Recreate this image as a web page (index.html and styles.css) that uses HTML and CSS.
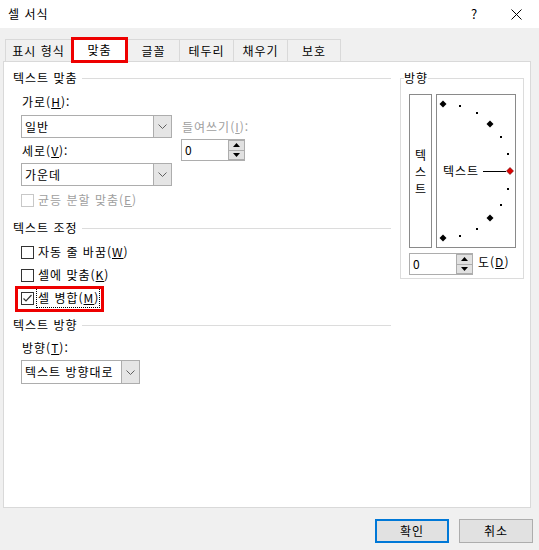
FILE: index.html
```html
<!DOCTYPE html>
<html lang="ko">
<head>
    <meta charset="UTF-8">
    <title>셀 서식</title>
    <link rel="stylesheet" href="styles.css">
</head>
<body>
<div class="dialog">
    <div class="titlebar">
        <span class="title">셀 서식</span>
        <span class="help">?</span>
        <span class="close">
            <svg width="11" height="11" viewBox="0 0 11 11"><path d="M0.5 0.5L10.5 10.5M10.5 0.5L0.5 10.5" stroke="#000" stroke-width="1" fill="none"/></svg>
        </span>
    </div>

    <!-- 탭 -->
    <div class="tabs">
        <div class="tab tab-1">표시 형식</div>
        <div class="tab tab-active">맞춤</div>
        <div class="tab tab-3">글꼴</div>
        <div class="tab tab-4">테두리</div>
        <div class="tab tab-5">채우기</div>
        <div class="tab tab-6">보호</div>
    </div>

    <div class="panel">
        <div class="left">
            <div class="group-title"><span>텍스트 맞춤</span></div>

            <div class="align-row">
                <div class="col-main">
                    <div class="label">가로(<u>H</u>):</div>
                    <div class="combo combo-h">
                        <span class="combo-text">일반</span>
                        <span class="combo-btn"><svg width="9" height="5" viewBox="0 0 9 5"><polyline points="0.5,0.5 4.5,4.5 8.5,0.5" fill="none" stroke="#606060"/></svg></span>
                    </div>
                    <div class="label label-v">세로(<u>V</u>):</div>
                    <div class="combo combo-v">
                        <span class="combo-text">가운데</span>
                        <span class="combo-btn"><svg width="9" height="5" viewBox="0 0 9 5"><polyline points="0.5,0.5 4.5,4.5 8.5,0.5" fill="none" stroke="#606060"/></svg></span>
                    </div>
                </div>
                <div class="col-indent">
                    <div class="label disabled">들여쓰기(<u>I</u>):</div>
                    <div class="spin">
                        <span class="spin-value">0</span>
                        <span class="spin-btns">
                            <span class="spin-btn"><svg width="7" height="4" viewBox="0 0 7 4"><polygon points="0,4 3.5,0 7,4" fill="#000"/></svg></span>
                            <span class="spin-btn"><svg width="7" height="4" viewBox="0 0 7 4"><polygon points="0,0 3.5,4 7,0" fill="#000"/></svg></span>
                        </span>
                    </div>
                </div>
            </div>

            <div class="check-row check-dist disabled">
                <span class="box box-disabled"></span>
                <span>균등 분할 맞춤(<u>E</u>)</span>
            </div>

            <div class="group-title title-control"><span>텍스트 조정</span></div>
            <div class="check-row check-first">
                <span class="box"></span>
                <span>자동 줄 바꿈(<u>W</u>)</span>
            </div>
            <div class="check-row check-next">
                <span class="box"></span>
                <span>셀에 맞춤(<u>K</u>)</span>
            </div>
            <div class="check-row check-next marked">
                <span class="box"><svg width="11" height="11" viewBox="0 0 11 11"><polyline points="1.5,5.5 4,8 9.5,2" fill="none" stroke="#333" stroke-width="1.2"/></svg></span>
                <span class="focus">셀 병합(<u>M</u>)</span>
            </div>

            <div class="group-title title-dir"><span>텍스트 방향</span></div>
            <div class="label label-dir">방향(<u>T</u>):</div>
            <div class="combo combo-dir">
                <span class="combo-text">텍스트 방향대로</span>
                <span class="combo-btn"><svg width="9" height="5" viewBox="0 0 9 5"><polyline points="0.5,0.5 4.5,4.5 8.5,0.5" fill="none" stroke="#606060"/></svg></span>
            </div>
        </div>

        <!-- 방향 그룹 -->
        <fieldset class="orient">
            <legend>방향</legend>
            <div class="orient-body">
                <div class="vert-box">
                    <span>텍</span><span>스</span><span>트</span>
                </div>
                <div class="dial">
                    <svg width="78" height="152" viewBox="0 0 78 152">
                        <g fill="#000">
                            <polygon points="6,5.5 9.5,9 6,12.5 2.5,9"/>
                            <polygon points="53,25.5 56.5,29 53,32.5 49.5,29"/>
                            <polygon points="53,119.5 56.5,123 53,126.5 49.5,123"/>
                            <polygon points="6,139.5 9.5,143 6,146.5 2.5,143"/>
                            <rect x="22" y="10" width="2" height="2"/>
                            <rect x="39" y="17" width="2" height="2"/>
                            <rect x="63" y="41" width="2" height="2"/>
                            <rect x="70" y="58" width="2" height="2"/>
                            <rect x="70" y="93" width="2" height="2"/>
                            <rect x="63" y="109" width="2" height="2"/>
                            <rect x="39" y="133" width="2" height="2"/>
                            <rect x="22" y="140" width="2" height="2"/>
                        </g>
                        <text x="6" y="80.5" class="dial-text">텍스트</text>
                        <line x1="46" y1="76.5" x2="69" y2="76.5" stroke="#000" stroke-width="1"/>
                        <polygon points="73,72.5 76.5,76 73,79.5 69.5,76" fill="#e00000" stroke="#5a0000" stroke-width="0.6"/>
                    </svg>
                </div>
            </div>
            <div class="degree-row">
                <div class="spin">
                    <span class="spin-value">0</span>
                    <span class="spin-btns">
                        <span class="spin-btn"><svg width="7" height="4" viewBox="0 0 7 4"><polygon points="0,4 3.5,0 7,4" fill="#000"/></svg></span>
                        <span class="spin-btn"><svg width="7" height="4" viewBox="0 0 7 4"><polygon points="0,0 3.5,4 7,0" fill="#000"/></svg></span>
                    </span>
                </div>
                <span class="degree-label">도(<u>D</u>)</span>
            </div>
        </fieldset>
    </div>

    <div class="footer">
        <div class="btn btn-ok">확인</div>
        <div class="btn">취소</div>
    </div>
</div>
</body>
</html>
```

FILE: styles.css
```css
/* 셀 서식 대화 상자 */
body {
    margin: 0;
    background: #f0f0f0;
    font-family: "Noto Sans CJK KR", "Malgun Gothic", sans-serif;
    font-size: 12px;
    line-height: 16px;
    letter-spacing: 1px;
    color: #000;
}

.dialog {
    width: 539px;
    height: 550px;
}

/* 제목 표시줄 */
.titlebar {
    height: 28px;
    background: #fff;
    display: flex;
    align-items: center;
}
.title {
    flex: 1;
    padding-left: 8px;
}
.help {
    width: 14px;
    text-align: center;
    font-size: 13px;
    letter-spacing: 0;
    margin-right: 30px;
}
.close {
    display: flex;
    margin-right: 17px;
}

/* 탭 */
.tabs {
    display: flex;
    align-items: flex-end;
    padding: 9px 0 0 5px;
}
.tab {
    height: 22px;
    box-sizing: border-box;
    border: 1px solid #d9d9d9;
    border-bottom: none;
    margin-left: -1px;
    display: flex;
    align-items: center;
    justify-content: center;
    background: #f0f0f0;
}
.tab-1 { width: 67px; margin-left: 0; }
.tab-3 { width: 53px; }
.tab-4 { width: 55px; }
.tab-5 { width: 55px; }
.tab-6 { width: 54px; }
.tab-active {
    width: 57px;
    height: 26px;
    margin-bottom: -2px;
    border: 3px solid #ee0000;
    background: #fff;
    position: relative;
    z-index: 1;
}

/* 본문 패널 */
.panel {
    margin-left: 3px;
    width: 528px;
    height: 447px;
    box-sizing: border-box;
    border: 1px solid #d9d9d9;
    background: #fff;
    display: flex;
    align-items: flex-start;
}
.left {
    width: 387px;
    box-sizing: border-box;
    padding: 8px 0 0 9px;
}

.group-title {
    display: flex;
    align-items: center;
    height: 16px;
}
.group-title::after {
    content: "";
    flex: 1;
    height: 1px;
    background: #dcdcdc;
    margin: 1px 0 0 4px;
}
.title-control { margin-top: 12px; }
.title-dir { margin-top: 9px; }

.label {
    height: 16px;
    padding-left: 1px;
}
.disabled { color: #a0a0a0; }

.align-row {
    display: flex;
    margin-top: 8px;
    padding-left: 8px;
}
.col-main { width: 151px; }
.col-indent { margin-left: 9px; }
.col-indent .label { margin-top: 25px; }

/* 콤보 상자 */
.combo {
    height: 23px;
    box-sizing: border-box;
    border: 1px solid #adadad;
    display: flex;
    background: #fff;
}
.combo-h { margin-top: 5px; }
.label-v { margin-top: 5px; }
.combo-v { margin-top: 4px; }
.combo-text {
    flex: 1;
    padding-left: 3px;
    line-height: 21px;
}
.combo-btn {
    width: 17px;
    border-left: 1px solid #adadad;
    background: #e5e5e5;
    display: flex;
    align-items: center;
    justify-content: center;
}
.label-dir {
    margin-top: 7px;
    padding-left: 9px;
}
.combo-dir {
    margin: 4px 0 0 8px;
    width: 119px;
    height: 24px;
}
.combo-dir .combo-text { line-height: 22px; }

/* 스핀 상자 */
.spin {
    margin-top: 4px;
    width: 64px;
    height: 22px;
    box-sizing: border-box;
    border: 1px solid #adadad;
    display: flex;
    background: #fff;
}
.spin-value {
    flex: 1;
    padding-left: 3px;
    line-height: 20px;
}
.spin-btns {
    width: 16px;
    display: flex;
    flex-direction: column;
}
.spin-btn {
    flex: 1;
    background: #e1e1e1;
    border: 1px solid #adadad;
    border-right: none;
    display: flex;
    align-items: center;
    justify-content: center;
}
.spin-btn + .spin-btn { border-top: none; }

/* 확인란 */
.check-row {
    display: flex;
    align-items: center;
    gap: 4px;
    height: 16px;
    margin-left: 8px;
}
.box {
    width: 13px;
    height: 13px;
    box-sizing: border-box;
    border: 1px solid #333;
    background: #fff;
    display: flex;
    align-items: center;
    justify-content: center;
}
.box-disabled { border-color: #c8c8c8; }
.check-dist { margin-top: 6px; }
.check-first { margin-top: 8px; }
.check-next { margin-top: 7px; }
.marked {
    width: fit-content;
    margin-left: 6px;
    padding: 0 0 2px 2px;
    outline: 3px solid #ee0000;
    outline-offset: 1px;
}
.focus {
    border: 1px dotted #000;
    padding: 1px 0 1px 1px;
    margin-left: -2px;
}

/* 방향 그룹 */
.orient {
    margin: 8px 0 0 9px;
    width: 124px;
    box-sizing: border-box;
    border: 1px solid #dcdcdc;
    padding: 8px 6px 3px 8px;
    min-inline-size: 0;
}
.orient legend {
    padding: 0;
    margin-left: -5px;
    line-height: 16px;
}
.orient-body {
    display: flex;
    gap: 4px;
}
.vert-box {
    width: 23px;
    height: 154px;
    box-sizing: border-box;
    border: 1px solid #8a8a8a;
    display: flex;
    flex-direction: column;
    align-items: center;
    justify-content: center;
    line-height: 17px;
    letter-spacing: 0;
}
.dial {
    width: 80px;
    height: 154px;
    box-sizing: border-box;
    border: 1px solid #8a8a8a;
}
.dial svg { display: block; }
.dial-text {
    font-family: "Noto Sans CJK KR", sans-serif;
    font-size: 12px;
}
.degree-row {
    display: flex;
    align-items: center;
    margin-top: 1px;
}
.degree-label { margin-left: 5px; }

/* 하단 버튼 */
.footer {
    display: flex;
    justify-content: flex-end;
    gap: 10px;
    margin-top: 11px;
    padding-right: 6px;
}
.btn {
    width: 74px;
    height: 24px;
    box-sizing: border-box;
    border: 1px solid #adadad;
    background: #e1e1e1;
    display: flex;
    align-items: center;
    justify-content: center;
}
.btn-ok { border: 2px solid #0078d7; }
```
